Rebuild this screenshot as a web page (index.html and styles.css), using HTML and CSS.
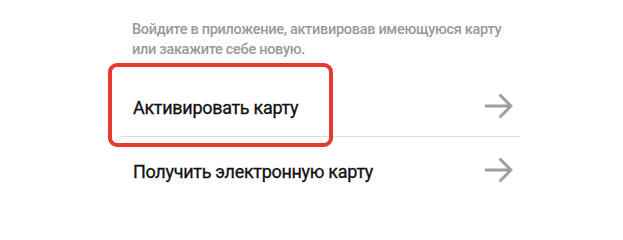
FILE: index.html
```html
<!DOCTYPE html>
<html lang="ru">
<head>
<meta charset="utf-8">
<title>Карта</title>
<link rel="stylesheet" href="styles.css">
</head>
<body>
<div class="panel">
  <p class="intro">Войдите в приложение, активировав имеющуюся карту<br>или закажите себе новую.</p>
  <ul class="menu">
    <li class="item">
      <span class="label">Активировать карту</span>
      <svg class="arrow" width="28" height="26" viewBox="0 0 28 26" aria-hidden="true"><path d="M0 13H26M14.5 1.5L26 13L14.5 24.5" fill="none" stroke="#9e9e9e" stroke-width="3"/></svg>
    </li>
    <li class="item">
      <span class="label">Получить электронную карту</span>
      <svg class="arrow" width="28" height="26" viewBox="0 0 28 26" aria-hidden="true"><path d="M0 13H26M14.5 1.5L26 13L14.5 24.5" fill="none" stroke="#9e9e9e" stroke-width="3"/></svg>
    </li>
  </ul>
  <div class="highlight"></div>
</div>
</body>
</html>
```
FILE: styles.css
```css
html, body {
  margin: 0;
  padding: 0;
  background: #ffffff;
}
body {
  font-family: Roboto, "Noto Sans", sans-serif;
  width: 623px;
  height: 218px;
  overflow: hidden;
}
.panel {
  position: relative;
  margin-left: 121px;
  width: 399px;
  padding-top: 20px;
}
.intro {
  margin: 0;
  padding-left: 11px;
  font-size: 14.5px;
  line-height: 20px;
  font-weight: 500;
  letter-spacing: -0.3px;
  white-space: nowrap;
  color: #999999;
}
.menu {
  list-style: none;
  margin: 13px 0 0;
  padding: 0;
}
.item {
  display: flex;
  align-items: center;
  justify-content: space-between;
  height: 63px;
  padding: 3px 7px 0 12px;
  box-sizing: border-box;
}
.item + .item {
  border-top: 1px solid #dcdcdc;
  height: 64px;
}
.label {
  margin-top: 3px;
  font-size: 18px;
  font-weight: 400;
  letter-spacing: -0.3px;
  color: #111111;
  -webkit-text-stroke: 0.3px #111111;
}
.arrow {
  display: block;
  flex: none;
}
.highlight {
  position: absolute;
  left: -13px;
  top: 63px;
  width: 225px;
  height: 84px;
  box-sizing: border-box;
  border: 4px solid #e53a2f;
  border-radius: 9px;
}
```
